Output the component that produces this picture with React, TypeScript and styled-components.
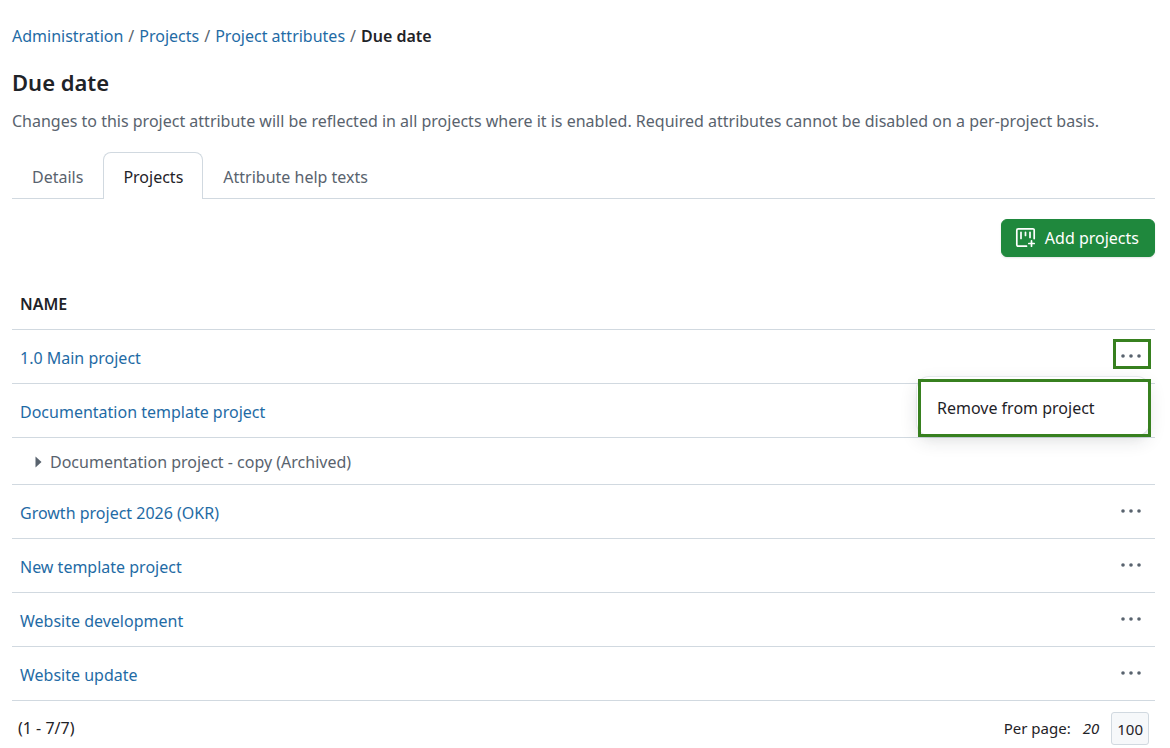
import React from "react";
import styled, { createGlobalStyle } from "styled-components";

const color = {
  text: "#1f2328",
  muted: "#59636e",
  link: "#1f6ba5",
  line: "#d1d9e0",
  green: "#1f883d",
  outline: "#37801f",
};

const GlobalStyle = createGlobalStyle`
  *, *::before, *::after { box-sizing: border-box; }
  body {
    margin: 0;
    background: #ffffff;
    color: ${color.text};
    font-family: "Segoe UI", "Noto Sans", sans-serif;
    font-size: 16px;
    line-height: 24px;
  }
  button { font: inherit; }
`;

const Page = styled.main`
  padding: 24px 15px 0 12px;
`;

const Link = styled.a`
  color: ${color.link};
  text-decoration: none;
  &:hover { text-decoration: underline; }
`;

const Crumbs = styled.ol`
  display: flex;
  flex-wrap: wrap;
  margin: 0;
  padding: 0;
  list-style: none;
`;

const Crumb = styled.li`
  & + &::before {
    content: "/";
    padding: 0 5px;
    color: ${color.muted};
  }
  [aria-current] { font-weight: 600; }
`;

const Title = styled.h1`
  margin: 18px 0 0;
  font-size: 22px;
  font-weight: 600;
  line-height: 32px;
`;

const Description = styled.p`
  margin: 11px 0 0;
  color: ${color.muted};
`;

const Tabs = styled.nav`
  display: flex;
  margin-top: 19px;
  border-bottom: 1px solid ${color.line};
`;

const Tab = styled.a<{ $selected?: boolean }>`
  margin-bottom: -1px;
  padding: 12px 19px 10px;
  border: 1px solid ${(p) => (p.$selected ? color.line : "transparent")};
  border-bottom: 0;
  border-radius: 8px 8px 0 0;
  background: ${(p) => (p.$selected ? "#ffffff" : "transparent")};
  color: ${(p) => (p.$selected ? color.text : color.muted)};
  text-decoration: none;
`;

const Toolbar = styled.div`
  display: flex;
  justify-content: flex-end;
  margin-top: 20px;
`;

const PrimaryButton = styled.button`
  display: flex;
  align-items: center;
  gap: 8px;
  height: 38px;
  padding: 0 15px 0 13px;
  border: 1px solid #1f883d;
  border-radius: 6px;
  background: ${color.green};
  box-shadow: 0 1px 2px rgba(31, 35, 40, 0.12);
  color: #ffffff;
`;

const Table = styled.table`
  width: 100%;
  margin-top: 22px;
  border-collapse: collapse;
`;

const HeadCell = styled.th`
  height: 50px;
  padding: 0 8px;
  border-bottom: 1px solid ${color.line};
  font-weight: 600;
  text-align: left;
  text-transform: uppercase;
`;

const NameCell = styled.td<{ $archived?: boolean }>`
  height: ${(p) => (p.$archived ? 47 : 54)}px;
  padding: ${(p) => (p.$archived ? "2px 8px 0 23px" : "4px 8px 0")};
  border-bottom: 1px solid ${color.line};
  color: ${color.muted};
`;

const ActionCell = styled.td`
  width: 60px;
  padding: 0 4px 4px 0;
  border-bottom: 1px solid ${color.line};
`;

const Archived = styled.span`
  display: flex;
  align-items: center;
  gap: 8px;
`;

const MenuAnchor = styled.div`
  position: relative;
  display: flex;
  justify-content: flex-end;
`;

const DotsButton = styled.button<{ $open?: boolean }>`
  display: grid;
  place-items: center;
  width: 38px;
  height: 30px;
  padding: 4px 2px 0 0;
  border: 3px solid ${(p) => (p.$open ? color.outline : "transparent")};
  background: transparent;
  color: ${color.muted};
`;

const Menu = styled.div`
  position: absolute;
  z-index: 1;
  top: 38px;
  right: 2px;
  width: 232px;
  border-radius: 12px;
  background: #ffffff;
  box-shadow: 0 0 0 1px rgba(209, 217, 224, 0.5),
    0 6px 12px -3px rgba(37, 41, 46, 0.04),
    0 6px 18px 0 rgba(37, 41, 46, 0.12);
  &::after {
    content: "";
    position: absolute;
    inset: 2px -2px -2px 1px;
    border: 3px solid ${color.outline};
    pointer-events: none;
  }
`;

const MenuItem = styled.button`
  width: 100%;
  height: 58px;
  padding: 4px 19px 0 20px;
  border: 0;
  background: transparent;
  color: ${color.text};
  text-align: left;
`;

const Footer = styled.footer`
  display: flex;
  align-items: center;
  justify-content: space-between;
  padding: 11px 6px 3px;
`;

const PerPage = styled.div`
  display: flex;
  align-items: center;
  gap: 12px;
  font-size: 15px;
`;

const PageSize = styled.button<{ $boxed?: boolean }>`
  height: 33px;
  padding: ${(p) => (p.$boxed ? "2px 5px 0" : "0")};
  border: ${(p) => (p.$boxed ? `1px solid ${color.line}` : "0")};
  border-radius: 3px;
  background: ${(p) => (p.$boxed ? "#f6f8fa" : "transparent")};
  color: ${color.text};
  font-style: ${(p) => (p.$boxed ? "normal" : "italic")};
`;

const BoardPlusIcon = () => (
  <svg width="22" height="22" viewBox="0 0 22 22" fill="none" stroke="currentColor" strokeWidth="1.7" strokeLinecap="round" strokeLinejoin="round" aria-hidden="true">
    <path d="M11.5 19.2H3.2A1.4 1.4 0 0 1 1.8 17.8V3.2A1.4 1.4 0 0 1 3.2 1.8H17.8A1.4 1.4 0 0 1 19.2 3.2V11.6" />
    <path d="M6 5.3V11.5M10.5 5.3V8.5M15 5.3V10.5M16.5 13.8V19.2M13.8 16.5H19.2" />
  </svg>
);

const DotsIcon = () => (
  <svg width="20" height="6" viewBox="0 0 20 6" fill="currentColor" aria-hidden="true">
    <circle cx="2" cy="3" r="1.8" />
    <circle cx="10" cy="3" r="1.8" />
    <circle cx="18" cy="3" r="1.8" />
  </svg>
);

const CaretIcon = () => (
  <svg width="7" height="12" viewBox="0 0 7 12" fill="currentColor" aria-hidden="true">
    <path d="M0.5 0.5L6.5 6L0.5 11.5Z" />
  </svg>
);

type Project = { name: string; archived?: boolean; actions?: boolean; open?: boolean };

const projects: Project[] = [
  { name: "1.0 Main project", actions: true, open: true },
  { name: "Documentation template project" },
  { name: "Documentation project - copy (Archived)", archived: true },
  { name: "Growth project 2026 (OKR)", actions: true },
  { name: "New template project", actions: true },
  { name: "Website development", actions: true },
  { name: "Website update", actions: true },
];

const ProjectRow = ({ project }: { project: Project }) => (
  <tr>
    <NameCell $archived={project.archived}>
      {project.archived ? (
        <Archived>
          <CaretIcon />
          {project.name}
        </Archived>
      ) : (
        <Link href="#">{project.name}</Link>
      )}
    </NameCell>
    <ActionCell>
      {project.actions && (
        <MenuAnchor>
          <DotsButton type="button" $open={project.open} aria-label={`Actions for ${project.name}`} aria-expanded={!!project.open}>
            <DotsIcon />
          </DotsButton>
          {project.open && (
            <Menu role="menu">
              <MenuItem type="button" role="menuitem">Remove from project</MenuItem>
            </Menu>
          )}
        </MenuAnchor>
      )}
    </ActionCell>
  </tr>
);

export default function App() {
  return (
    <>
      <GlobalStyle />
      <Page>
        <nav aria-label="Breadcrumb">
          <Crumbs>
            <Crumb><Link href="#">Administration</Link></Crumb>
            <Crumb><Link href="#">Projects</Link></Crumb>
            <Crumb><Link href="#">Project attributes</Link></Crumb>
            <Crumb><span aria-current="page">Due date</span></Crumb>
          </Crumbs>
        </nav>
        <Title>Due date</Title>
        <Description>
          Changes to this project attribute will be reflected in all projects where it is enabled. Required attributes cannot be disabled on a per-project basis.
        </Description>
        <Tabs aria-label="Project attribute">
          <Tab href="#">Details</Tab>
          <Tab href="#" $selected aria-current="page">Projects</Tab>
          <Tab href="#">Attribute help texts</Tab>
        </Tabs>
        <Toolbar>
          <PrimaryButton type="button">
            <BoardPlusIcon />
            Add projects
          </PrimaryButton>
        </Toolbar>
        <Table>
          <thead>
            <tr>
              <HeadCell scope="col" colSpan={2}>Name</HeadCell>
            </tr>
          </thead>
          <tbody>
            {projects.map((project) => (
              <ProjectRow key={project.name} project={project} />
            ))}
          </tbody>
        </Table>
        <Footer>
          <span>(1 - 7/7)</span>
          <PerPage>
            <span>Per page:</span>
            <PageSize type="button">20</PageSize>
            <PageSize type="button" $boxed aria-pressed="true">100</PageSize>
          </PerPage>
        </Footer>
      </Page>
    </>
  );
}
